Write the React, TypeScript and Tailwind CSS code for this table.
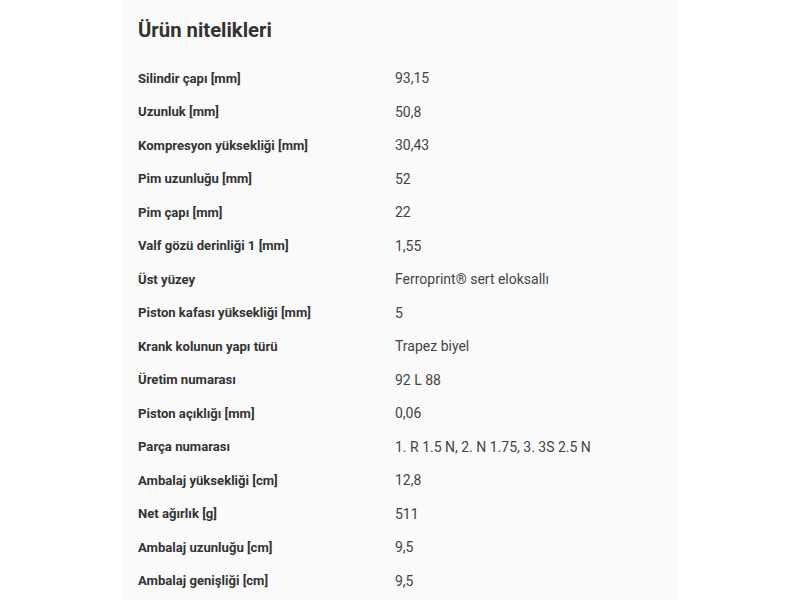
const ROWS: [string, string][] = [
  ["Silindir çapı [mm]", "93,15"],
  ["Uzunluk [mm]", "50,8"],
  ["Kompresyon yüksekliği [mm]", "30,43"],
  ["Pim uzunluğu [mm]", "52"],
  ["Pim çapı [mm]", "22"],
  ["Valf gözü derinliği 1 [mm]", "1,55"],
  ["Üst yüzey", "Ferroprint® sert eloksallı"],
  ["Piston kafası yüksekliği [mm]", "5"],
  ["Krank kolunun yapı türü", "Trapez biyel"],
  ["Üretim numarası", "92 L 88"],
  ["Piston açıklığı [mm]", "0,06"],
  ["Parça numarası", "1. R 1.5 N, 2. N 1.75, 3. 3S 2.5 N"],
  ["Ambalaj yüksekliği [cm]", "12,8"],
  ["Net ağırlık [g]", "511"],
  ["Ambalaj uzunluğu [cm]", "9,5"],
  ["Ambalaj genişliği [cm]", "9,5"],
];

export default function App() {
  return (
    <div className="min-h-screen bg-white font-['Roboto',sans-serif]">
      <section className="mx-auto w-[556px] h-[600px] overflow-hidden bg-[#fafafa] px-4 pt-4">
        <h2 className="text-[20.3px] leading-[28px] font-bold text-[#333]">Ürün nitelikleri</h2>
        <dl className="mt-[18px]">
          {ROWS.map(([label, value]) => (
            <div key={label} className="grid grid-cols-[257px_1fr] h-[33.5px] items-center">
              <dt className="text-[13.1px] font-bold text-[#333]">{label}</dt>
              <dd className="text-[14px] text-[#444]">{value}</dd>
            </div>
          ))}
        </dl>
      </section>
    </div>
  );
}
